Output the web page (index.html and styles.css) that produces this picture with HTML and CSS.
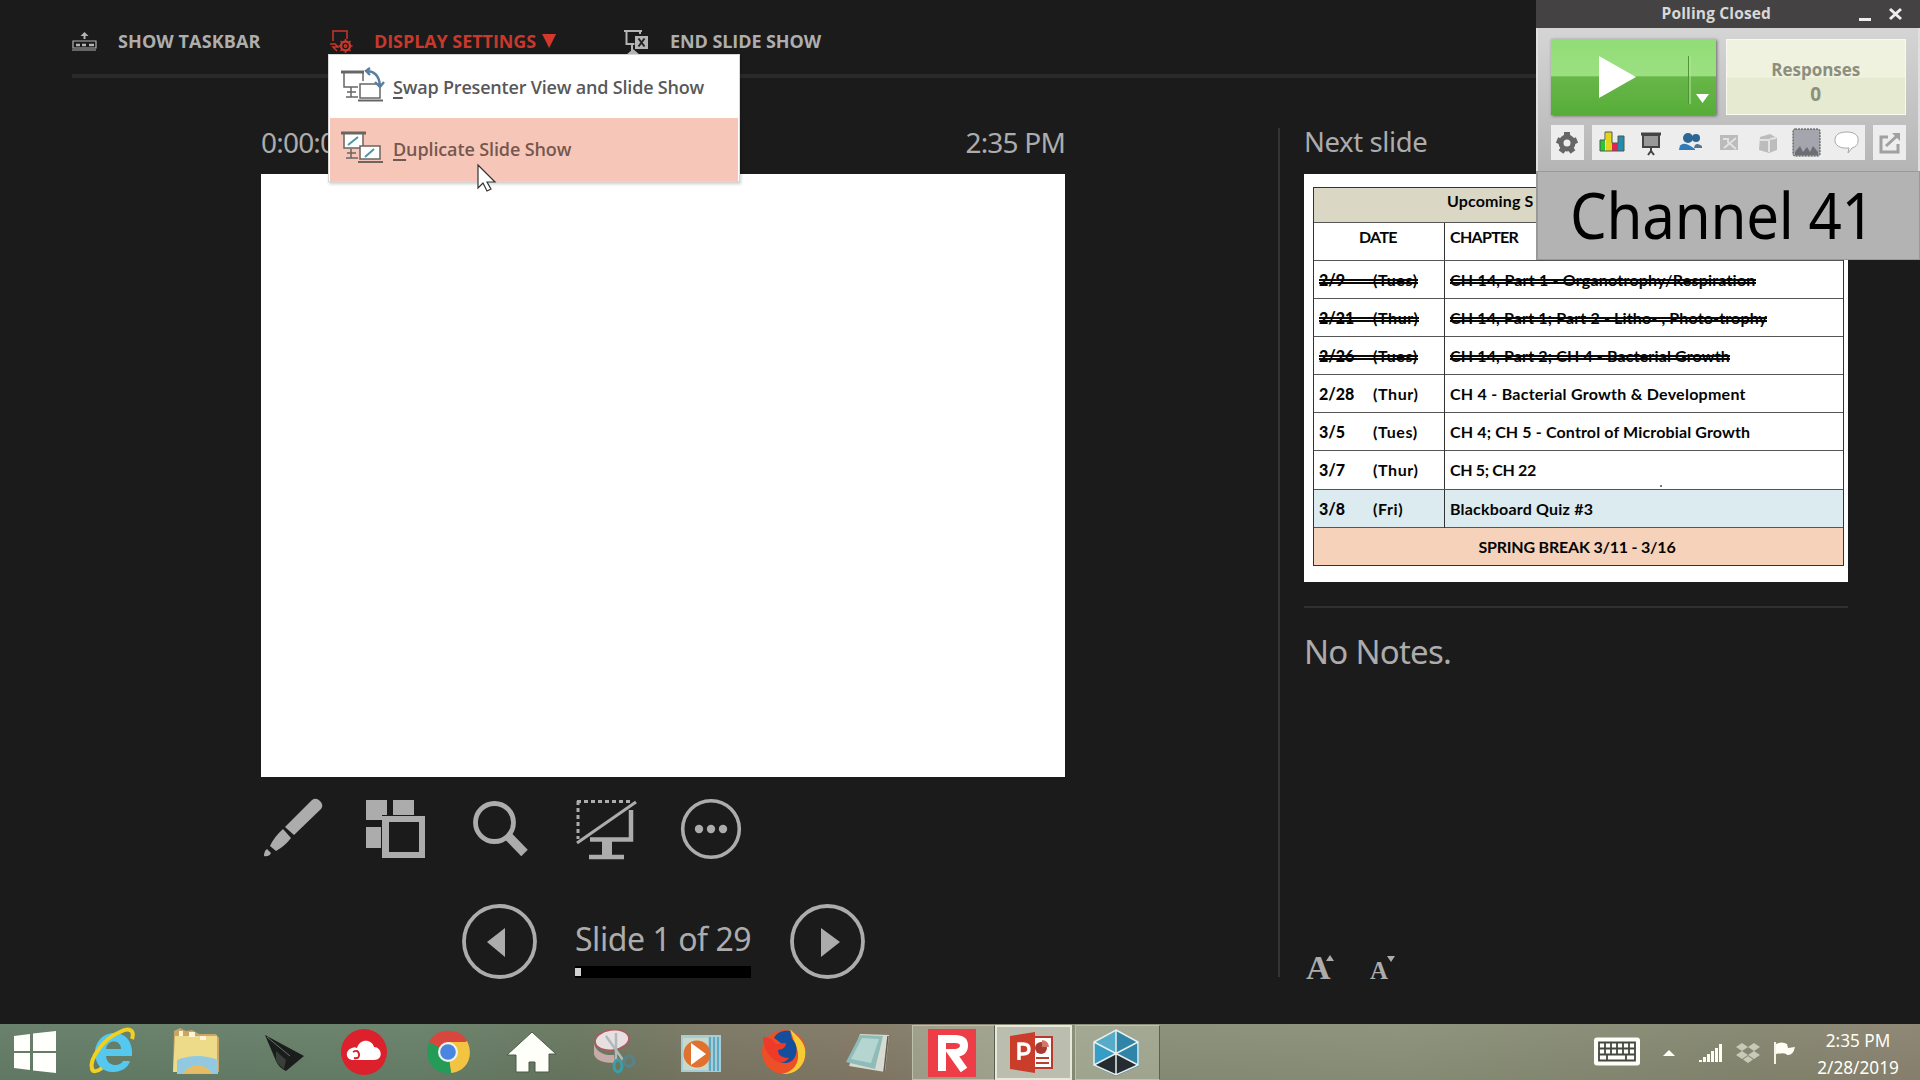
FILE: index.html
```html
<!DOCTYPE html>
<html lang="en">
<head>
<meta charset="utf-8">
<title>Presenter View</title>
<link rel="stylesheet" href="styles.css">
</head>
<body>
<div class="presenter">
  <header class="topbar">
    <div class="command">
      <svg class="cmd-icon" width="25" height="28" viewBox="0 0 25 28" fill="none" stroke="#b4b4b4"><path d="M1 13h23v7H1zM0 22h24" stroke-width="1.200"/><path d="M4 17h4m2 0h4m3 0h5" stroke-width="2.400"/><path d="M12.500 11V6" stroke-width="2"/><path d="M8.500 8l4-4 4 4z" fill="#b4b4b4" stroke="none"/></svg>
      <span class="t-taskbar">SHOW TASKBAR</span>
    </div>
    <div class="command active">
      <svg class="cmd-icon" width="26" height="28" viewBox="0 0 26 28" fill="none" stroke="#c8382c" stroke-width="1.500"><path d="M3 13V3h14v8"/><path d="M0 16h5l3 3H3l4 4"/><circle cx="15.500" cy="18" r="4.500" stroke-width="2.400"/><circle cx="15.500" cy="18" r="1.200"/><path d="M15.500 11v3m0 8v3m-7-7h3m8 0h3m-12-5l2 2m6 6l2 2m0-10l-2 2m-6 6l-2 2"/></svg>
      <span class="t-display">DISPLAY SETTINGS</span><i class="down"></i>
    </div>
    <div class="command">
      <svg class="cmd-icon" width="25" height="28" viewBox="0 0 25 28"><path d="M0 3h18M2.500 4v12h8M16 17v4M16 2v4M8 17v6" fill="none" stroke="#b4b4b4" stroke-width="2"/><path d="M11 8h13v13H11z" fill="#b4b4b4"/><path d="M14.500 10.500l6 8m0-8l-6 8" stroke="#222" stroke-width="2"/><path d="M2 27l7-6 7 6z" fill="#b4b4b4"/></svg>
      <span class="t-end">END SLIDE SHOW</span>
    </div>
  </header>
  <div class="workspace">
    <main class="current">
      <div class="times"><span class="timer">0:00:0</span><span class="clock">2:35 PM</span></div>
      <div class="slide"></div>
      <div class="tools">
        <svg width="60" height="62" viewBox="0 0 60 62" fill="#acacac"><path d="M21 29L48 2q4-3 8 1t1 8L30 37z"/><path d="M19 31l8 9q-6 8-15 13l-6-5q4-9 13-17z"/><path d="M3 51l4 4q-2 4-7 3 0-5 3-7z"/></svg>
        <svg width="60" height="62" viewBox="0 0 60 62" fill="#acacac"><path d="M0 2h21v15h-5v5H0zM27 2h21v15H27zM0 29h15v21H0z"/><path fill-rule="evenodd" d="M16 18h43v42H16zm7 6v30h30V24z"/></svg>
        <svg width="60" height="62" viewBox="0 0 60 62" fill="none" stroke="#acacac"><circle cx="22.500" cy="24.500" r="19" stroke-width="4.800"/><path d="M36 38l16.500 17" stroke-width="9"/></svg>
        <svg width="62" height="62" viewBox="0 0 62 62" fill="none" stroke="#acacac"><path d="M1 3.500h54" stroke-width="3" stroke-dasharray="4 3"/><path d="M2 3v38" stroke-width="3" stroke-dasharray="4 3"/><path d="M1 45L60 4" stroke-width="3"/><path d="M14 41.500h41V12" stroke-width="4.500"/><path d="M31 42v16" stroke-width="10"/><path d="M13 59h35" stroke-width="4.500"/></svg>
        <svg width="62" height="62" viewBox="0 0 62 62"><circle cx="31" cy="31" r="28.300" fill="none" stroke="#acacac" stroke-width="3.600"/><g fill="#acacac"><circle cx="19" cy="31" r="4.200"/><circle cx="31" cy="31" r="4.200"/><circle cx="43" cy="31" r="4.200"/></g></svg>
      </div>
      <div class="nav">
        <svg width="76" height="76" viewBox="0 0 76 76"><circle cx="38.500" cy="37.500" r="35.500" fill="none" stroke="#acacac" stroke-width="3.800"/><path d="M26 38l18-14v29z" fill="#acacac"/></svg>
        <div class="position"><span class="t-slide">Slide 1 of 29</span><div class="progress"><div class="progress-fill"></div></div></div>
        <svg width="76" height="76" viewBox="0 0 76 76"><circle cx="38.500" cy="37.500" r="35.500" fill="none" stroke="#acacac" stroke-width="3.800"/><path d="M51 38L32 24v29z" fill="#acacac"/></svg>
      </div>
    </main>
    <aside class="side">
      <div class="next-title"><span class="t-next">Next slide</span></div>
      <div class="preview">
        <div class="sched">
          <div class="row title"><div class="cell">Upcoming S</div></div>
          <div class="row heads"><div class="cell date">DATE</div><div class="cell">CHAPTER</div></div>
          <div class="row done"><div class="cell date"><s><b>2/9</b><em>(Tues)</em></s></div><div class="cell"><s class="wide">CH 14, Part 1 - Organotrophy/Respiration</s></div></div>
          <div class="row done"><div class="cell date"><s><b>2/21</b><em>(Thur)</em></s></div><div class="cell"><s>CH 14, Part 1; Part 2 - Litho- , Photo-trophy</s></div></div>
          <div class="row done"><div class="cell date"><s><b>2/26</b><em>(Tues)</em></s></div><div class="cell"><s>CH 14, Part 2; CH 4 - Bacterial Growth</s></div></div>
          <div class="row"><div class="cell date"><b>2/28</b><em>(Thur)</em></div><div class="cell wider">CH 4 - Bacterial Growth &amp; Development</div></div>
          <div class="row"><div class="cell date"><b>3/5</b><em>(Tues)</em></div><div class="cell">CH 4; CH 5 - Control of Microbial Growth</div></div>
          <div class="row dotted"><div class="cell date"><b>3/7</b><em>(Thur)</em></div><div class="cell tight">CH 5; CH 22</div></div>
          <div class="row quiz"><div class="cell date"><b>3/8</b><em>(Fri)</em></div><div class="cell wide">Blackboard Quiz #3</div></div>
          <div class="row break"><div class="cell">SPRING BREAK 3/11 - 3/16</div></div>
        </div>
      </div>
      <div class="notes"><span class="t-notes">No Notes.</span></div>
      <div class="font-size"><span class="big">A<i class="caret up"></i></span><span class="small">A<i class="caret dn"></i></span></div>
    </aside>
  </div>
</div>

<footer class="taskbar">
  <div class="launch">
    <svg width="68" height="56" viewBox="0 0 68 56" fill="#fffffc"><path d="M14 12l16-2v17H14zM33 9.500L56 7v20H33zM14 29h16v17l-16-2zM33 29h23v20l-23-2.500z"/></svg>
    <svg width="84" height="56" viewBox="0 0 84 56"><path d="M62 37c-2 7-9 11-17 11-11 0-18-8-18-19S35 9 46 9c12 0 19 9 18 23H38c1 11 14 11 17 5z" fill="#55c8f0"/><path d="M38 25h15c0-10-14-10-15 0z" fill="#667e69"/><path d="M64 15c3-9-3-12-12-7C36 14 21 35 24 45c1 3 5 3 10-1" fill="none" stroke="#f0d020" stroke-width="4"/></svg>
    <svg width="84" height="56" viewBox="0 0 84 56"><path d="M22 7l6-3 6 3 6-1 7 4h17l3 4v34H21z" fill="#cba567"/><path d="M23 12h42v36H21z" fill="#eedb89"/><path d="M27 7h4v5h-4zM37 8h6v5h-6zM48 12h6v4h-6z" fill="#fff5d4"/><path d="M25 36q20-8 41 0v14H25z" fill="#92c8e0"/><path d="M31 49q15-16 29 0z" fill="#e6bd65"/></svg>
    <svg width="84" height="56" viewBox="0 0 84 56"><path d="M29 11l39 21-18 15q-7-3-10-10z" fill="#1a1d1b"/><path d="M40 27l10 9-2 9q-7-5-8-10z" fill="#414b43" opacity=".75"/><path d="M31 13l23 19" stroke="#68736a"/></svg>
    <svg width="84" height="56" viewBox="0 0 84 56"><circle cx="44" cy="28" r="23" fill="#dc202c"/><path d="M32 36c-7-1-7-10 0-12 2-1 3-1 5 0 3-10 15-9 17-1 8 0 10 13 0 13z" fill="#fff"/><path d="M33 28q5-3 6 2t-5 4" fill="none" stroke="#dc202c" stroke-width="2"/></svg>
    <svg width="84" height="56" viewBox="0 0 84 56"><path d="M44 28L25 18C30 9 38 6 46 7c8 0 14 4 17 10z" fill="#d7473d"/><path d="M44 28L63 17c7 14 1 30-16 32z" fill="#f3c441"/><path d="M44 28l3 21C27 51 19 32 25 18z" fill="#249b57"/><path d="M43 18h20L48 36z" fill="#f3c441"/><circle cx="44" cy="28" r="10" fill="#eef2e8"/><circle cx="44" cy="28" r="7.800" fill="#4a85df"/></svg>
    <svg width="84" height="56" viewBox="0 0 84 56"><path d="M19 31L44 8l24 22h-7v18H47V38h-6v10H28V31z" fill="#fffffa" stroke="#4b5a4b"/></svg>
    <svg width="84" height="56" viewBox="0 0 84 56"><path d="M22 20q4 12 20 11l1 8q-19 0-21-9z" fill="#c7aba8"/><ellipse cx="40" cy="16" rx="17" ry="10" fill="#e8dfe0" stroke="#b1565d" stroke-width="1.500" transform="rotate(-8 40 16)"/><path d="M34 12l17 24M44 9l0 27" stroke="#aebabb" stroke-width="2.500"/><ellipse cx="46" cy="42" rx="4" ry="6" fill="none" stroke="#3a9fa9" stroke-width="3"/><circle cx="57" cy="37" r="5" fill="none" stroke="#55858c" stroke-width="3"/></svg>
    <svg width="84" height="56" viewBox="0 0 84 56"><path d="M25 11h40v37H25z" fill="#a6cdd5"/><path d="M54 13v34m4-34v34m4-34v34" stroke="#4a9cba" stroke-width="1.500"/><path d="M27 14h25v32H27z" fill="#c9d8c9"/><circle cx="41" cy="30" r="13.500" fill="#e0712e"/><path d="M35 19l15 11-15 11z" fill="#fff"/></svg>
    <svg width="84" height="56" viewBox="0 0 84 56"><circle cx="44" cy="28" r="22" fill="#ed5027"/><path d="M50 5c5 6 18 13 15 28-2 12-13 18-23 17 15-3 20-16 13-30z" fill="#f5cb36"/><path d="M34 14c3-6 9-8 16-7l2 8c9 8 4 25-7 24-9 0-9-6-5-7-6-1-9-7-5-10 5-3 9-2 10 0z" fill="#164e9e"/><path d="M23 13q9 0 13 7l10-1q0 6-8 7 0 8 11 8-8 9-17 0-9-8-9-21z" fill="#ee3a29"/></svg>
    <svg width="84" height="56" viewBox="0 0 84 56"><path d="M36 10l29 1-4 37-36-6z" fill="#d7dbd1"/><path d="M36 11l23 1-8 33-29-7z" fill="#8fbcb9"/><path d="M38 14l17 1-8 24-20-4z" fill="#b4d5d0"/><path d="M64 12l-4 36" stroke="#62594e" stroke-width="1.500"/></svg>
  </div>
  <div class="open">
    <div class="task t1"><svg width="48" height="48" viewBox="0 0 48 48"><path d="M0 0h48v48H0z" fill="#ed3e48"/><path d="M14 42V10h13q9 0 9 6.500T28 24h-4l12 17" fill="none" stroke="#fff" stroke-width="8"/></svg></div>
    <div class="task t2"><svg width="48" height="48" viewBox="0 0 48 48"><path d="M25 8h19v31H25z" fill="#fff" stroke="#b9392c" stroke-width="2"/><circle cx="33" cy="19" r="6" fill="#a93a31"/><path d="M34 18V11q7 1 7 7z" fill="#d27868"/><path d="M28 29h13m-13 5h13" stroke="#ba3d30" stroke-width="2"/><path d="M2 7l25-4v41L2 40z" fill="#cb3d2b"/><path d="M11 31V15h4q6 0 6 5t-6 5h-4" fill="none" stroke="#fff" stroke-width="3.500"/></svg></div>
    <div class="task t3"><svg width="48" height="48" viewBox="0 0 48 48"><path d="M24 1l23 12v24L24 47 2 37V13z" fill="#2f84a8"/><path d="M24 1v23L2 13z" fill="#56abc8"/><path d="M2 13l22 11L2 36z" fill="#369dc8"/><path d="M24 24l22 12-22 11L3 36z" fill="#242c31"/><path d="M24 1l22 12v23L24 46 2 36V13zM24 1v45M2 13l44 23M46 13L2 36" fill="none" stroke="#e9f0ec" stroke-width="1.500"/></svg></div>
  </div>
  <div class="tray">
    <svg width="48" height="56" viewBox="0 0 48 56"><rect x="0" y="13.500" width="46" height="28" rx="3" fill="#fffffa"/><path d="M5 18.500h36v18H5zM5 24.500h36M5 30.500h36M11 18.500v12m6-12v12m6-12v12m6-12v12m6-12v12M13 30.500v6m19-6v6" fill="none" stroke="#434840" stroke-width="1.800"/></svg>
    <svg class="tray-up" width="14" height="56" viewBox="0 0 14 56"><path d="M1 32l6-6 6 6z" fill="#fffff5"/></svg>
    <svg class="tray-net" width="26" height="56" viewBox="0 0 26 56" fill="#fffff5"><path d="M2 36h3v2H2zM6 33h3v5H6zM10 30h3v8h-3zM14 27h3v11h-3zM18 24h3v14h-3zM22 20h3v18h-3z"/></svg>
    <svg class="tray-box" width="26" height="56" viewBox="0 0 26 56" fill="#c8c9b8"><path d="M7 19l6 4-6 4-6-4zM19 19l6 4-6 4-6-4zM7 27l6 4-6 4-6-4zM19 27l6 4-6 4-6-4zM13 32l5 3.500-5 3.500-5-3.500z"/></svg>
    <svg class="tray-flag" width="24" height="56" viewBox="0 0 24 56"><path d="M2 18v22" stroke="#fffff5" stroke-width="1.800"/><path d="M3 20q6-3 11 0l1 4 7-1q-2 9-8 8-1-3-11-1z" fill="#fffff5"/></svg>
    <div class="datetime"><span class="tt">2:35 PM</span><span class="dd">2/28/2019</span></div>
  </div>
</footer>

<div class="menu">
  <div class="item"><svg width="46" height="40" viewBox="0 0 46 40" fill="none" stroke="#666" stroke-width="1.500"><path d="M0 5h23" stroke-width="3"/><path d="M3 5v15h14M22 5v9M10 20v10M5 30h12M6 25h9"/><path d="M19 17h20v14H19z" fill="#fff"/><path d="M17 33.500h25" stroke-width="2"/><g stroke="#5a7f9f" stroke-width="2.400"><path d="M25 4q13 0 14 15M29 1l-4 3 4 4M34 15l5 5 4-5"/></g></svg><span class="m1"><u>S</u>wap Presenter View and Slide Show</span></div>
  <div class="item hover"><svg width="46" height="40" viewBox="0 0 46 40" fill="none" stroke="#6c6460" stroke-width="1.500"><path d="M3 4h19v15H3z" fill="#fff"/><path d="M0 4h25" stroke-width="3"/><path d="M10 20v9M5 29h12M6 24h9"/><path d="M19 17h20v13H19z" fill="#fff"/><path d="M17 33h25" stroke-width="2"/><path d="M7 16L17 8M24 28l9-8" stroke="#4d95a7" stroke-width="2"/></svg><span class="m2"><u>D</u>uplicate Slide Show</span></div>
</div>
<svg class="pointer" width="20" height="30" viewBox="0 0 20 30"><path d="M1 1v23l5-5 4 8 4-2-4-7h8z" fill="#fff" stroke="#333" stroke-width="1.200"/></svg>

<div class="polling">
  <div class="poll-title"><span class="t-poll">Polling Closed</span><div class="win"><i class="min"></i><svg width="13" height="12" viewBox="0 0 13 12"><path d="M1 1l11 10m0-10L1 11" stroke="#eee" stroke-width="3"/></svg></div></div>
  <div class="poll-body">
    <div class="poll-row">
      <div class="start"><svg width="164" height="76" viewBox="0 0 164 76" fill="#fff"><path d="M48 17v42l37-21zM145 55h13l-6.500 9z"/><path d="M137.500 17v48" stroke="#4c9733"/><path d="M139 17v48" stroke="#b6e5a0"/></svg></div>
      <div class="responses"><span class="t-resp">Responses</span><span class="count">0</span></div>
    </div>
    <div class="poll-tools">
      <div class="box single"><svg width="24" height="24" viewBox="0 0 24 24"><circle cx="12" cy="12" r="6" fill="none" stroke="#666" stroke-width="5"/><path d="M12 1v5M2 9l5 2M22 9l-5 2M6 21l3-4M18 21l-3-4" stroke="#666" stroke-width="6"/></svg></div>
      <div class="box group">
        <svg width="28" height="28" viewBox="0 0 28 28"><path d="M1 11h5v11H1z" fill="#27c53b"/><path d="M7 3h6v19H7z" fill="#e1d51e"/><path d="M13 14h6v8h-6z" fill="#db2753"/><path d="M19 7h6v15h-6z" fill="#248cac"/><path d="M1 22V11h5V3h7v11h6V7h6v15z" fill="none" stroke="#52594a"/></svg>
        <svg width="28" height="28" viewBox="0 0 28 28" fill="none" stroke="#444"><path d="M4 5h20" stroke-width="3"/><path d="M6 6h16v12H6z" fill="#999" stroke-width="2"/><path d="M14 18v4m-3 4l3-4 3 4" stroke-width="2"/></svg>
        <svg width="28" height="28" viewBox="0 0 28 28" fill="#2b6694"><circle cx="20" cy="9" r="4"/><path d="M18 19q1-7 8-2v2z" fill="#55758c"/><circle cx="12" cy="9" r="5"/><path d="M3 21q1-12 16-1v1z" fill="#317cb8"/></svg>
        <svg width="28" height="28" viewBox="0 0 28 28"><path d="M5 6h18v15H5z" fill="#bbb"/><path d="M8 10h5v3l8 7M9 19l12-10" stroke="#e2e2e2" stroke-width="2" fill="none"/></svg>
        <svg width="28" height="28" viewBox="0 0 28 28"><path d="M7 8l10-3 7 4v12l-8 3-10-3z" fill="#bcbcbc"/><path d="M7 11h9v12M17 10l6-1" stroke="#e2e2e2" stroke-width="2" fill="none"/></svg>
        <svg width="30" height="30" viewBox="0 0 30 30"><rect x="1" y="1" width="27" height="27" rx="2" fill="#a5a6ad" stroke="#444" stroke-dasharray="2 1"/><path d="M3 24l5-6 3 6 4-5 3 5 3-6 5 6v3H3z" fill="#6c6e74"/></svg>
        <svg width="28" height="28" viewBox="0 0 28 28"><path d="M17 19C8 20 2 16 3 10 4 4 10 3 15 3c8 0 12 4 11 9 0 4-3 6-6 7l-4 5z" fill="#fff" stroke="#a8a8a8"/></svg>
      </div>
      <div class="box single"><svg width="24" height="26" viewBox="0 0 24 26" fill="none" stroke="#a0a0a0" stroke-width="3"><path d="M10 7H3v15h17v-8M8 16L20 5"/><path d="M14 3h8v8z" fill="#a0a0a0" stroke="none"/></svg></div>
    </div>
  </div>
  <div class="channel"><span class="t-channel">Channel 41</span></div>
</div>
</body>
</html>
```
FILE: styles.css
```css
* { box-sizing: border-box; }
body { margin: 0; width: 1920px; height: 1080px; overflow: hidden; background: #1b1b1b; font-family: "Noto Sans", "Open Sans", sans-serif; color: #acacac; display: flex; flex-direction: column; white-space: nowrap; }
svg { display: block; flex: none; overflow: visible; }
.presenter { height: 1024px; display: flex; flex-direction: column; }

.topbar { height: 78px; margin: 0 72px; border-bottom: 4px solid #2a2a2a; display: flex; padding-top: 28px; font: 700 18px/26px "Open Sans", sans-serif; letter-spacing: -.08px; color: #aeaeae; }
.command { display: flex; height: 28px; }
.command:nth-child(1) { width: 258px; letter-spacing: .1px; }
.command:nth-child(2) { width: 294px; }
.cmd-icon { margin-right: 21px; }
.active { color: #c8382c; }
.active .cmd-icon { margin-right: 18px; }
.down { margin: 6px 0 0 6px; width: 14px; height: 14px; background: #d3382c; clip-path: polygon(0 0, 100% 0, 50% 100%); }

.workspace { flex: 1; display: grid; grid-template-columns: 1280px 1fr; }
.current { padding-left: 261px; display: flex; flex-direction: column; background: linear-gradient(#343434, #343434) 1278px 50px / 2px 849px no-repeat; }
.times { height: 96px; width: 804px; padding-top: 43px; display: flex; justify-content: space-between; font-size: 28px; line-height: 42px; letter-spacing: -.8px; }
.slide { width: 804px; height: 603px; background: #fff; }
.tools { height: 103px; display: flex; padding: 21px 0 0 3px; }
.tools svg:nth-child(1) { margin-right: 42px; }
.tools svg:nth-child(2) { margin-right: 46px; }
.tools svg:nth-child(3) { margin-right: 44px; }
.tools svg:nth-child(4) { margin-right: 42px; }
.nav { display: flex; align-items: center; gap: 38px; padding-left: 200px; height: 124px; }
.position { width: 176px; height: 76px; font-size: 32px; line-height: 70px; letter-spacing: -.45px; }
.progress { margin-top: -6px; height: 12px; background: #000; padding: 2px 0; }
.progress-fill { width: 6px; height: 8px; background: #d2d2d2; }
.t-slide { display: block; height: 68px; }

.side { width: 568px; padding-left: 24px; display: flex; flex-direction: column; }
.next-title { height: 96px; padding-top: 43px; font-size: 27.500px; line-height: 41px; letter-spacing: -.4px; }
.preview { height: 408px; background: #fff; padding: 13px 4px 0 9px; }
.sched { border: 1px solid #333; font: 700 16px/38px Lato, sans-serif; color: #050505; height: 379px; width: 531px; display: grid; grid-template-rows: 35px 38px repeat(7, 38.100px) 1fr; letter-spacing: .14px; }
.row { display: grid; grid-template-columns: 131px 1fr; border-bottom: 1.500px solid #555; min-height: 0; }
.row:last-child { border-bottom: 0; }
.cell { padding-left: 5px; }
.cell b { display: inline-block; width: 54px; letter-spacing: 0; }
.cell em { font-style: normal; letter-spacing: .6px; }
.date { border-right: 1.500px solid #333; }
.title, .break { grid-template-columns: 1fr; }
.title { background: #dad8c5; line-height: 26px; }
.title .cell { padding-left: 133px; }
.heads { line-height: 28px; letter-spacing: -.7px; }
.heads .date { padding-left: 45px; }
.row s { display: inline-block; text-decoration: none; background: linear-gradient(transparent 18px, #0a0a0a 18px 20px, transparent 20px 21.500px, #0a0a0a 21.500px 23.500px, transparent 23.500px); }
.wide { letter-spacing: .2px; }
.wider { letter-spacing: .26px; }
.tight { letter-spacing: -.35px; }
.dotted { background: radial-gradient(#777 1px, transparent 1.500px) 345px 33px / 4px 4px no-repeat; }
.quiz { background: #dcebf0; }
.break { background: #f6d2bb; text-align: center; letter-spacing: -.2px; }
.break .cell { padding-right: 3px; padding-left: 0; }
.notes { margin-top: 24px; border-top: 2px solid #303030; height: 346px; padding-top: 19px; font-size: 33px; line-height: 50px; letter-spacing: -.75px; }
.font-size { display: flex; gap: 36px; padding-left: 2px; margin-top: -1px; font-family: "Liberation Serif", serif; font-weight: 700; line-height: 34px; align-items: baseline; }
.big { font-size: 34px; width: 28px; position: relative; }
.small { font-size: 25px; width: 20px; position: relative; }
.caret { position: absolute; width: 8px; height: 6px; background: #acacac; }
.up { top: 4px; left: 20px; clip-path: polygon(50% 0, 100% 100%, 0 100%); }
.dn { top: 2px; left: 17px; clip-path: polygon(0 0, 100% 0, 50% 100%); }

.taskbar { height: 56px; display: flex; align-items: stretch; background: linear-gradient(180deg, rgba(255,255,255,.04), rgba(0,0,0,.04)), linear-gradient(90deg, #647d67 0, #677f69 420px, #68775f 570px, #7a7763 700px, #837966 880px, #898d77 1060px, #8a9078 1400px, #84866f 1750px, #8b8371 1920px); }
.launch { width: 912px; display: flex; }
.open { display: flex; width: 682px; }
.task { height: 55px; margin-top: 1px; border: 1px solid #bcc1ae; border-right-color: #5c6051; background: rgba(190,197,178,.45); display: flex; justify-content: center; align-items: center; }
.t1 { width: 83px; padding-right: 4px; }
.t2 { width: 77px; background: #bbbeae; border: 2px solid #e6e9dc; padding-right: 3px; }
.t3 { width: 85px; margin-left: 3px; padding-right: 3px; }
.tray { display: flex; }
.tray-up { margin-left: 20px; }
.tray-net { margin-left: 21px; }
.tray-box { margin-left: 12px; }
.tray-flag { margin-left: 12px; }
.datetime { display: flex; flex-direction: column; align-items: center; width: 86px; margin-left: 18px; padding-top: 4px; font-size: 17.200px; line-height: 26.500px; color: #fffff5; }

.menu { position: absolute; left: 328px; top: 54px; width: 412px; height: 128px; background: #fff; border: 1px solid #d7d7d7; box-shadow: 1px 2px 3px rgba(0,0,0,.2); font: 600 18px/62px "Open Sans", sans-serif; color: #58585a; }
.item { height: 63px; display: flex; align-items: center; padding-left: 12px; gap: 6px; letter-spacing: -.19px; }
.item u { text-decoration-thickness: 1.500px; text-underline-offset: 3px; }
.hover { background: #f6c7b8; color: #76574f; margin: 0 1px; padding-left: 11px; letter-spacing: -.12px; padding-bottom: 2px; }
.pointer { position: absolute; left: 477px; top: 164px; }

.polling { position: absolute; left: 1536px; top: 0; width: 384px; height: 260px; background: #b3b3b3; display: flex; flex-direction: column; }
.poll-title { height: 28px; background: #444243; display: flex; justify-content: flex-end; align-items: center; color: #d8d8d8; font: 700 15.500px/27px "Open Sans", sans-serif; letter-spacing: .15px; }
.t-poll { height: 28px; }
.win { display: flex; margin-left: 88px; margin-right: 18px; gap: 18px; align-items: center; }
.min { width: 12px; height: 3px; background: #eee; margin-top: 10px; }
.poll-body { height: 143px; border: 1px solid #e0e0e0; border-width: 0 2px; background: linear-gradient(#d5d5d5, #b5b5b5); padding: 11px 12px 0 13px; }
.poll-row { display: flex; gap: 10px; height: 86px; }
.start { width: 165px; height: 76px; background: linear-gradient(#91dd77, #9ce081 48%, #68b649 50%, #57ad38); box-shadow: 1px 1px 3px #666; }
.responses { width: 181px; height: 76px; border: 1px solid #f9faef; background: linear-gradient(#eff2df 50%, #e5ead0 52%); display: flex; flex-direction: column; align-items: center; padding-top: 17px; font: 700 17px/25px "Open Sans", sans-serif; color: #8c8e7e; }
.count { font-size: 19px; }
.poll-tools { display: flex; gap: 8px; height: 35px; }
.box { background: #ededed; display: flex; align-items: center; }
.single { width: 33px; justify-content: center; }
.group { width: 274px; justify-content: space-between; padding: 0 5px 0 7px; }
.channel { height: 89px; border: 1px solid #999; border-left: 2px solid #999; background: #b3b3b3; color: #000; font-size: 63px; line-height: 86px; padding-left: 32px; letter-spacing: -.3px; }
.t-channel { display: inline-block; transform: scaleX(.925); transform-origin: 0 0; }
```
